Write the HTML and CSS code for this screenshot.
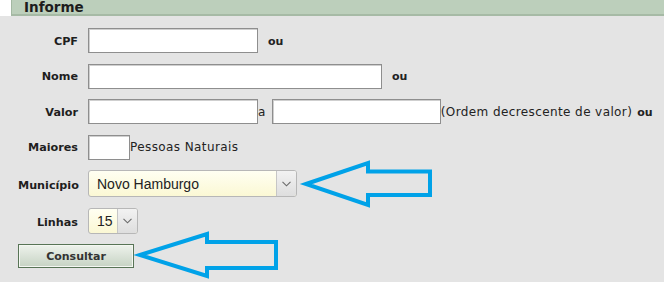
FILE: index.html
```html
<!DOCTYPE html>
<html lang="pt">
<head>
    <meta charset="UTF-8">
    <title>Informe</title>
    <link rel="stylesheet" href="styles.css">
</head>
<body>
    <div class="page">
        <div class="caption">Informe</div>
        <form class="panel">
            <div class="row">
                <label class="lbl" for="cpf">CPF</label>
                <input type="text" id="cpf" class="txt w-cpf">
                <span class="or">ou</span>
            </div>
            <div class="row">
                <label class="lbl" for="nome">Nome</label>
                <input type="text" id="nome" class="txt w-nome">
                <span class="or">ou</span>
            </div>
            <div class="row">
                <label class="lbl" for="valor1">Valor</label>
                <input type="text" id="valor1" class="txt w-cpf">
                <span class="note between">a</span>
                <input type="text" id="valor2" class="txt w-valor">
                <span class="note">(Ordem decrescente de valor)</span>
                <span class="or or-near">ou</span>
            </div>
            <div class="row">
                <label class="lbl" for="maiores">Maiores</label>
                <input type="text" id="maiores" class="txt w-maiores">
                <span class="note">Pessoas Naturais</span>
            </div>
            <div class="row">
                <label class="lbl" for="municipio">Município</label>
                <span class="combo w-mun">
                    <select id="municipio">
                        <option>Novo Hamburgo</option>
                    </select>
                    <span class="drop">
                        <svg width="9" height="6" viewBox="0 0 9 6"><polyline points="0.5,0.8 4.5,4.8 8.5,0.8" fill="none" stroke="#6a6a6a" stroke-width="1.1"/></svg>
                    </span>
                </span>
            </div>
            <div class="row row-lin">
                <label class="lbl" for="linhas">Linhas</label>
                <span class="combo w-lin">
                    <select id="linhas">
                        <option>15</option>
                    </select>
                    <span class="drop">
                        <svg width="9" height="6" viewBox="0 0 9 6"><polyline points="0.5,0.8 4.5,4.8 8.5,0.8" fill="none" stroke="#6a6a6a" stroke-width="1.1"/></svg>
                    </span>
                </span>
            </div>
            <div class="row">
                <button type="button" class="btn">Consultar</button>
            </div>
        </form>

        <!-- setas desenhadas por cima do formulário -->
        <svg class="arrows" width="664" height="284" viewBox="0 0 664 284">
            <polygon points="306,184 368,163 368,171.5 430,171.5 430,195 368,195 368,205" fill="none" stroke="#00a2e8" stroke-width="4" stroke-linejoin="miter"/>
            <polygon points="140,255 207,234 207,242 276,242 276,268 207,268 207,276" fill="none" stroke="#00a2e8" stroke-width="4" stroke-linejoin="miter"/>
        </svg>
    </div>
</body>
</html>
```

FILE: styles.css
```css
body {
    margin: 0;
    background: #ffffff;
    font-family: "DejaVu Sans", Verdana, sans-serif;
    color: #222;
}
.page {
    position: relative;
    width: 664px;
    height: 284px;
    overflow: hidden;
}
.caption {
    margin-left: 11px;
    height: 14px;
    line-height: 14px;
    padding-left: 12px;
    background: #bccfbb;
    border-left: 1px solid #a3b8a2;
    border-bottom: 2px solid #a6baa5;
    font-size: 13.5px;
    font-weight: bold;
    color: #1c1c1c;
}
.panel {
    height: 266px;
    box-sizing: border-box;
    margin: 0;
    padding: 12px 0 0 18px;
    background: #e4e4e4;
    display: flex;
    flex-direction: column;
    gap: 10.5px;
}
.row {
    display: flex;
    align-items: baseline;
}
.lbl {
    width: 60px;
    margin-right: 10px;
    text-align: right;
    font-size: 11.2px;
    font-weight: bold;
    color: #1e1e1e;
}
.txt {
    box-sizing: border-box;
    height: 25px;
    margin: 0;
    padding: 0 4px;
    border: 1px solid #8e8e8e;
    box-shadow: inset 1px 1px 0 #cfcfcf;
    background: #fff;
    font: 12px "DejaVu Sans", Verdana, sans-serif;
}
.w-cpf { width: 170px; }
.w-nome { width: 294px; }
.w-valor { width: 169px; }
.w-maiores { width: 42px; }
.or {
    margin-left: 10px;
    font-size: 11px;
    font-weight: bold;
}
.or-near { margin-left: 5px; }
.note {
    font-size: 12px;
    letter-spacing: 0.4px;
}
.between {
    margin: 0 6px 0 0;
}
.combo {
    box-sizing: border-box;
    display: inline-flex;
    height: 27px;
    border: 1px solid #b7b7b7;
    border-radius: 3px;
    overflow: hidden;
    background: linear-gradient(#fffff2, #fbf8d4);
}
.row-lin .combo { height: 26px; }
.w-mun { width: 209px; }
.w-lin { width: 50px; }
.combo select {
    -webkit-appearance: none;
    appearance: none;
    flex: 1;
    min-width: 0;
    margin: 0;
    padding: 0 0 0 8px;
    border: 0;
    background: transparent;
    font: 14px "Liberation Sans", Arial, sans-serif;
    color: #222;
    outline: none;
}
.drop {
    width: 19px;
    flex: none;
    border-left: 1px solid #c6c6c6;
    background: linear-gradient(#f2f2f2, #dedede);
    display: flex;
    align-items: center;
    justify-content: center;
}
.btn {
    box-sizing: border-box;
    width: 116px;
    height: 24px;
    margin: 0;
    border: 1px solid #587456;
    box-shadow: inset 0 0 0 1px #f4f7f2;
    background: linear-gradient(#eef2ec, #c6d3c3);
    font: bold 11px "DejaVu Sans", Verdana, sans-serif;
    color: #333;
    cursor: pointer;
}
.arrows {
    position: absolute;
    left: 0;
    top: 0;
    pointer-events: none;
}
```
